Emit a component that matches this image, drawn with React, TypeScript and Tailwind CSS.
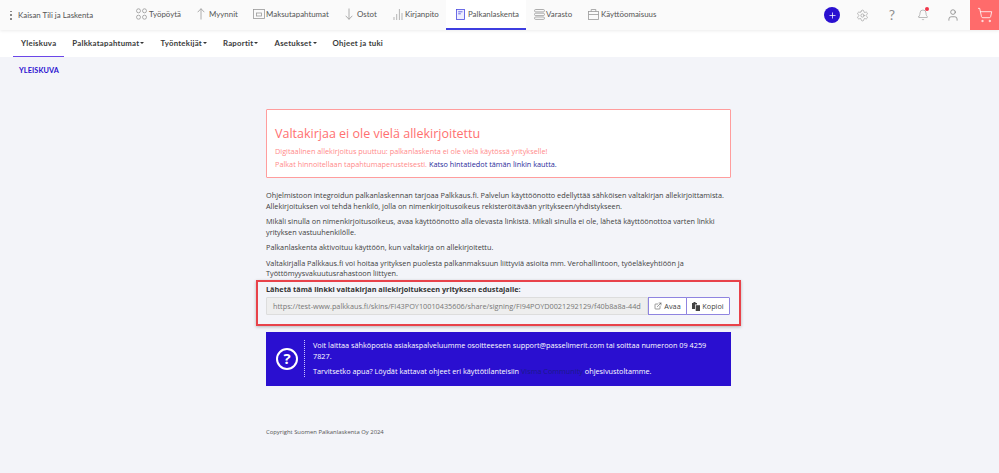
import React from "react";
import { Settings, Bell, User, ShoppingCart, ExternalLink, Plus } from "lucide-react";

function NavItem({ icon, label, className, active }: { icon: React.ReactNode; label: string; className: string; active?: boolean }) {
  return (
    <div className={`flex h-[30px] shrink-0 items-center border-b-2 ${active ? "border-[#3d3de0] bg-white" : "border-transparent"} ${className}`}>
      {icon}
      <span className="text-[7.9px] whitespace-nowrap text-[#555]">{label}</span>
    </div>
  );
}

const Grid = () => (
  <svg width="11" height="12" viewBox="0 0 11 12" fill="none" stroke="#999" strokeWidth="0.8" className="mr-[2px] shrink-0">
    <circle cx="2.5" cy="2.8" r="2" /><circle cx="8.5" cy="2.8" r="2" /><circle cx="2.5" cy="9.2" r="2" /><circle cx="8.5" cy="9.2" r="2" />
  </svg>
);
const Up = () => (
  <svg width="8" height="12" viewBox="0 0 8 12" fill="none" stroke="#999" strokeWidth="0.8" className="mr-[4px] shrink-0">
    <path d="M4 11.5V.7M.7 4.2L4 .7l3.3 3.5" />
  </svg>
);
const Money = () => (
  <svg width="12" height="10" viewBox="0 0 12 10" fill="none" stroke="#999" strokeWidth="0.8" className="mr-[1px] shrink-0">
    <rect x="0.5" y="0.5" width="11" height="9" /><rect x="3.5" y="4" width="5" height="3" />
  </svg>
);
const Down = () => (
  <svg width="8" height="12" viewBox="0 0 8 12" fill="none" stroke="#999" strokeWidth="0.8" className="mr-[4px] shrink-0">
    <path d="M4 .5v10.8M.7 7.8L4 11.3l3.3-3.5" />
  </svg>
);
const Bars = () => (
  <svg width="10" height="12" viewBox="0 0 10 12" fill="none" stroke="#b5b5b5" strokeWidth="1" className="mr-[2px] shrink-0">
    <path d="M1 12V9M3.7 12V6M6.4 12V1M9 12V5" />
  </svg>
);
const Doc = () => (
  <svg width="9" height="11" viewBox="0 0 9 11" fill="#eef" stroke="#4a4ae0" strokeWidth="0.8" className="mr-[3px] shrink-0">
    <rect x="0.5" y="0.5" width="8" height="10" /><path d="M2.2 2.8h4.3M2.2 4.8h2.6" />
  </svg>
);
const Stack = () => (
  <svg width="11" height="11" viewBox="0 0 11 11" fill="none" stroke="#999" strokeWidth="0.8" className="mr-[1px] shrink-0">
    <rect x="0.5" y="0.5" width="10" height="2.4" rx="1.2" /><rect x="0.5" y="4.2" width="10" height="2.4" rx="1.2" /><rect x="0.5" y="8" width="10" height="2.4" rx="1.2" />
  </svg>
);
const Case = () => (
  <svg width="11" height="11" viewBox="0 0 11 11" fill="none" stroke="#999" strokeWidth="0.8" className="mr-[2px] shrink-0">
    <rect x="0.5" y="2.5" width="10" height="8" /><path d="M3.2 2.5V.5h4.6v2M.5 5.5h10" />
  </svg>
);
const CopyGlyph = () => (
  <svg width="8" height="9" viewBox="0 0 8 9" fill="#444" className="shrink-0">
    <path d="M0 1h1.5V0h2v1H5v1.5H3V7H0z" />
    <path d="M3.7 3.2H8V9H3.7z" />
  </svg>
);

function Sub({ label, caret, active }: { label: string; caret?: boolean; active?: boolean }) {
  return (
    <div className={`flex h-[27px] shrink-0 items-center border-b-[1.5px] px-[8px] text-[7.8px] font-bold tracking-[0.25px] whitespace-nowrap text-[#3a3a3a] ${active ? "border-[#6b46e8]" : "border-transparent"}`}>
      {label}
      {caret && <span className="ml-[1px] h-0 w-0 border-x-[2px] border-t-[2px] border-x-transparent border-t-[#333]" />}
    </div>
  );
}

export default function App() {
  return (
    <div className="flex h-[473px] w-[999px] flex-col overflow-hidden bg-[#f3f4f9] font-['Open_Sans',sans-serif] text-[7.3px] leading-[10.5px] text-[#404040]">
      <header className="z-10 flex h-[30px] shrink-0 items-center bg-[#fafafa] font-['Lato',sans-serif] shadow-[0_1px_3px_rgba(0,0,0,0.08)]">
        <span className="ml-[10px] flex h-[9px] w-[2px] flex-col justify-between">
          <i className="h-[1.5px] w-[1.5px] bg-[#888]" /><i className="h-[1.5px] w-[1.5px] bg-[#888]" /><i className="h-[1.5px] w-[1.5px] bg-[#888]" />
        </span>
        <span className="ml-[6px] w-[75px] text-[7.9px] whitespace-nowrap text-[#555]">Kaisan Tili ja Laskenta</span>
        <NavItem icon={<Grid />} label="Työpöytä" className="ml-[43px] w-[61px]" />
        <NavItem icon={<Up />} label="Myynnit" className="w-[56px]" />
        <NavItem icon={<Money />} label="Maksutapahtumat" className="w-[92px]" />
        <NavItem icon={<Down />} label="Ostot" className="w-[48px]" />
        <NavItem icon={<Bars />} label="Kirjanpito" className="w-[53px]" />
        <NavItem icon={<Doc />} label="Palkanlaskenta" className="w-[80px] pl-[10px]" active />
        <NavItem icon={<Stack />} label="Varasto" className="ml-[8px] w-[54px]" />
        <NavItem icon={<Case />} label="Käyttöomaisuus" className="w-[70px]" />
        <div className="ml-auto flex h-[30px] items-center">
          <span className="flex h-[16px] w-[16px] items-center justify-center rounded-full bg-[#2a10d0]">
            <Plus size={9} color="#fff" strokeWidth={2} />
          </span>
          <Settings size={13} color="#909090" strokeWidth={1.1} className="ml-[16px]" />
          <span className="ml-[17px] w-[12px] text-center text-[14px] leading-none text-[#909090]">?</span>
          <span className="relative ml-[19px]">
            <Bell size={12} color="#909090" strokeWidth={1.2} />
            <i className="absolute -top-[2px] right-0 h-[4px] w-[4px] rounded-full bg-[#f0364a]" />
          </span>
          <User size={14} color="#808080" strokeWidth={1.3} className="ml-[17px]" />
          <span className="ml-[10px] flex h-[30px] w-[29px] items-center justify-center bg-[#ff6b6b]">
            <ShoppingCart size={16} color="#fff" strokeWidth={1.2} />
          </span>
        </div>
      </header>

      <nav className="flex h-[27px] shrink-0 bg-white pl-[13px] font-['Lato',sans-serif]">
        <Sub label="Yleiskuva" active />
        <Sub label="Palkkatapahtumat" caret />
        <Sub label="Työntekijät" caret />
        <Sub label="Raportit" caret />
        <Sub label="Asetukset" caret />
        <Sub label="Ohjeet ja tuki" />
      </nav>

      <div className="ml-[19px] mt-[9px] font-['Lato',sans-serif] text-[7.3px] leading-[10px] font-bold tracking-[0.1px] text-[#2a10d0]">YLEISKUVA</div>

      <main className="ml-[266px] mt-[33px] w-[465px]">
        <section className="h-[69px] rounded-[1px] border border-[#ff9d9d] bg-white px-[8px] pt-[16px] text-[#ff8a8a]">
          <h1 className="text-[12.5px] leading-[16px] text-[#ff7070]">Valtakirjaa ei ole vielä allekirjoitettu</h1>
          <p className="mt-[3px] leading-[13px]">Digitaalinen allekirjoitus puuttuu: palkanlaskenta ei ole vielä käytössä yritykselle!</p>
          <p className="leading-[13px]">Palkat hinnoitellaan tapahtumaperusteisesti. <span className="text-[#2a2a9a]">Katso hintatiedot tämän linkin kautta.</span></p>
        </section>

        <p className="mt-[12px]">Ohjelmistoon integroidun palkanlaskennan tarjoaa Palkkaus.fi. Palvelun käyttöönotto edellyttää sähköisen valtakirjan allekirjoittamista. Allekirjoituksen voi tehdä henkilö, jolla on nimenkirjoitusoikeus rekisteröitävään yritykseen/yhdistykseen.</p>
        <p className="mt-[5px]">Mikäli sinulla on nimenkirjoitusoikeus, avaa käyttöönotto alla olevasta linkistä. Mikäli sinulla ei ole, lähetä käyttöönottoa varten linkki yrityksen vastuuhenkilölle.</p>
        <p className="mt-[5px]">Palkanlaskenta aktivoituu käyttöön, kun valtakirja on allekirjoitettu.</p>
        <p className="mt-[5px]">Valtakirjalla Palkkaus.fi voi hoitaa yrityksen puolesta palkanmaksuun liittyviä asioita mm. Verohallintoon, työeläkeyhtiöön ja Työttömyysvakuutusrahastoon liittyen.</p>

        <div className="-mx-[10px] mt-[1px] h-[46px] border-2 border-[#e8424a] px-[8px] pt-[2px] shadow-[0_1px_3px_rgba(0,0,0,0.25)]">
          <div className="font-bold text-[#333]">Lähetä tämä linkki valtakirjan allekirjoitukseen yrityksen edustajalle:</div>
          <div className="mt-[3px] flex h-[18px]">
            <div className="flex w-[382px] items-center overflow-hidden rounded-l-[1px] border border-[#ddd] bg-[#eeeeee] pl-[6px] whitespace-nowrap text-[#777]">https://test-www.palkkaus.fi/skins/FI43POY10010435606/share/signing/FI94POYD0021292129/f40b8a8a-44d</div>
            <button className="flex w-[39px] items-center justify-center gap-[2px] border border-[#8f84e0] bg-white text-[#444]"><ExternalLink size={8} strokeWidth={1.6} />Avaa</button>
            <button className="-ml-px flex w-[44px] items-center justify-center gap-[2px] rounded-r-[1px] border border-[#8f84e0] bg-white text-[#444]"><CopyGlyph />Kopioi</button>
          </div>
        </div>

        <section className="mt-[6px] flex h-[54px] items-center bg-[#2a0fd0] pr-[8px] text-white">
          <div className="ml-[10px] flex h-[22px] w-[22px] shrink-0 items-center justify-center rounded-full border-2 border-white text-[15px] font-bold">?</div>
          <div className="ml-[6px] flex h-[37px] flex-col justify-start border-l border-dotted border-[#c9c4ff] pl-[8px]">
            <p>Voit laittaa sähköpostia asiakaspalveluumme osoitteeseen support@passelimerit.com tai soittaa numeroon 09 4259 7827.</p>
            <p className="mt-[5px]">Tarvitsetko apua? Löydät kattavat ohjeet eri käyttötilanteisiin <span className="text-[#1a1a8a]">Visma Community</span> ohjesivustoltamme.</p>
          </div>
        </section>

        <footer className="mt-[41px] text-[5.9px] text-[#555]">Copyright Suomen Palkanlaskenta Oy 2024</footer>
      </main>
    </div>
  );
}
